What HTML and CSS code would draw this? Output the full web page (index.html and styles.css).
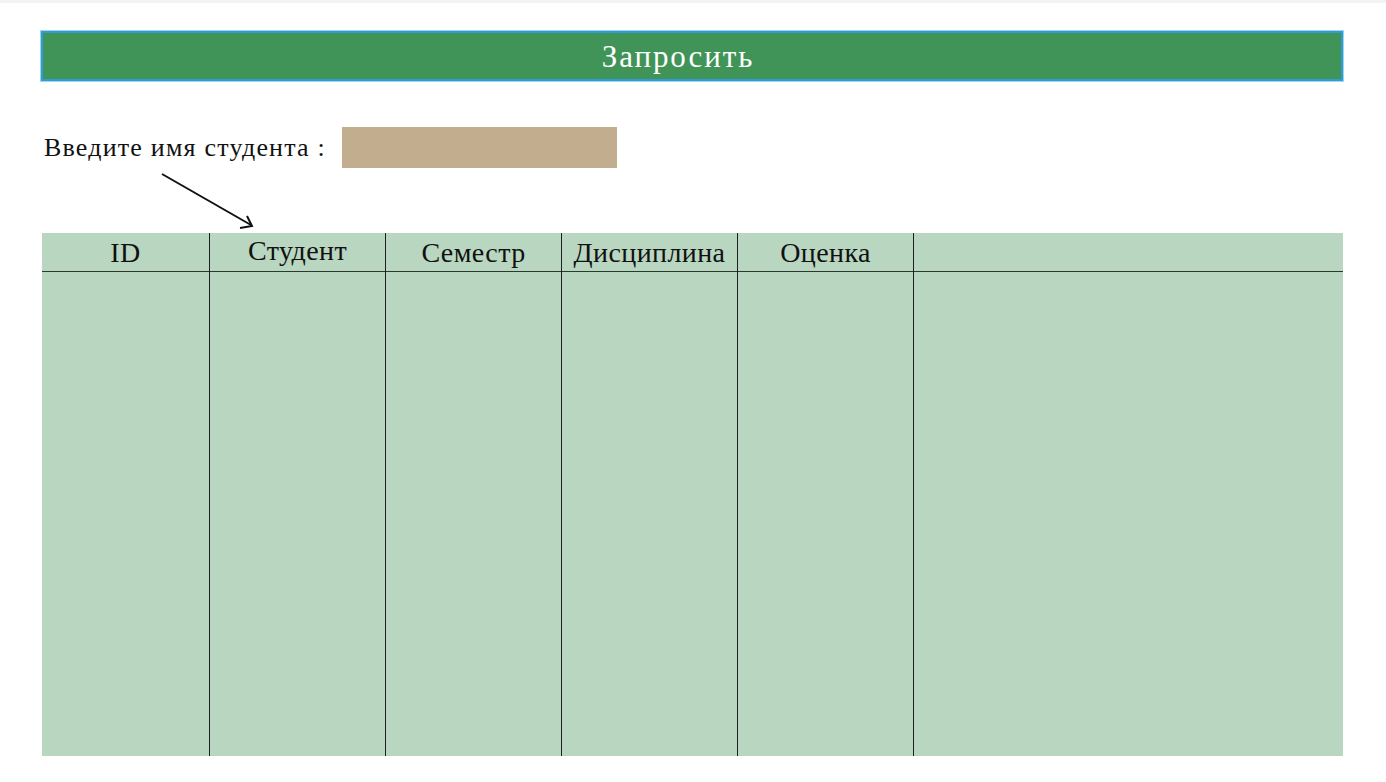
FILE: index.html
```html
<!DOCTYPE html>
<html lang="ru">
<head>
<meta charset="utf-8">
<title>Запросить</title>
<link rel="stylesheet" href="styles.css">
</head>
<body>
<div class="topstrip"></div>
<main class="page">
  <div class="btn">Запросить</div>
  <div class="form-row">
    <span class="label">Введите имя студента :</span>
    <div class="input"></div>
  </div>
  <svg class="arrow" width="300" height="65" viewBox="0 0 300 65">
    <line x1="121" y1="6" x2="210" y2="57" stroke="#111" stroke-width="2"/>
    <polyline points="199,60 211,58 206,48" fill="none" stroke="#111" stroke-width="2"/>
  </svg>
  <div class="grid">
    <div class="col c1"><div class="head">ID</div></div>
    <div class="col c2"><div class="head">Студент</div></div>
    <div class="col c3"><div class="head">Семестр</div></div>
    <div class="col c4"><div class="head">Дисциплина</div></div>
    <div class="col c5"><div class="head">Оценка</div></div>
    <div class="col c6"><div class="head"></div></div>
  </div>
</main>
</body>
</html>
```

FILE: styles.css
```css
html, body {
  margin: 0;
  padding: 0;
  background: #ffffff;
}
body {
  font-family: "Liberation Serif", "Times New Roman", serif;
  color: #111;
}
.topstrip {
  height: 3px;
  background: #f3f3f3;
}
.page {
  padding: 28px 42px 0 41px;
}
.btn {
  height: 46px;
  border: 2px solid #2f9cd6;
  box-shadow: 0 0 0 1px #9fd3f0;
  background: #419457;
  color: #ffffff;
  font-size: 31px;
  letter-spacing: 1.9px;
  line-height: 48px;
  text-align: center;
  padding-right: 28px;
  box-sizing: content-box;
  width: 1270px;
}
.form-row {
  display: flex;
  align-items: center;
  margin-top: 46px;
  padding-left: 3px;
}
.label {
  font-size: 26px;
  letter-spacing: 1.2px;
  width: 298px;
  white-space: nowrap;
}
.input {
  width: 275px;
  height: 41px;
  background: #c2ad8f;
}
.arrow {
  display: block;
}
.grid {
  display: flex;
  margin-left: 1px;
  width: 1301px;
  height: 523px;
  background: #b8d6c0;
}
.col {
  border-right: 1px solid #1e1e1e;
  box-sizing: border-box;
}
.c1 { width: 168px; }
.c2, .c3, .c4, .c5 { width: 176px; }
.c6 { flex: 1; border-right: none; }
.head {
  height: 38px;
  border-bottom: 1px solid #2a3a2e;
  font-size: 28px;
  letter-spacing: 0.4px;
  line-height: 40px;
  text-align: center;
  white-space: nowrap;
}
.c2 .head { line-height: 35px; }
```
